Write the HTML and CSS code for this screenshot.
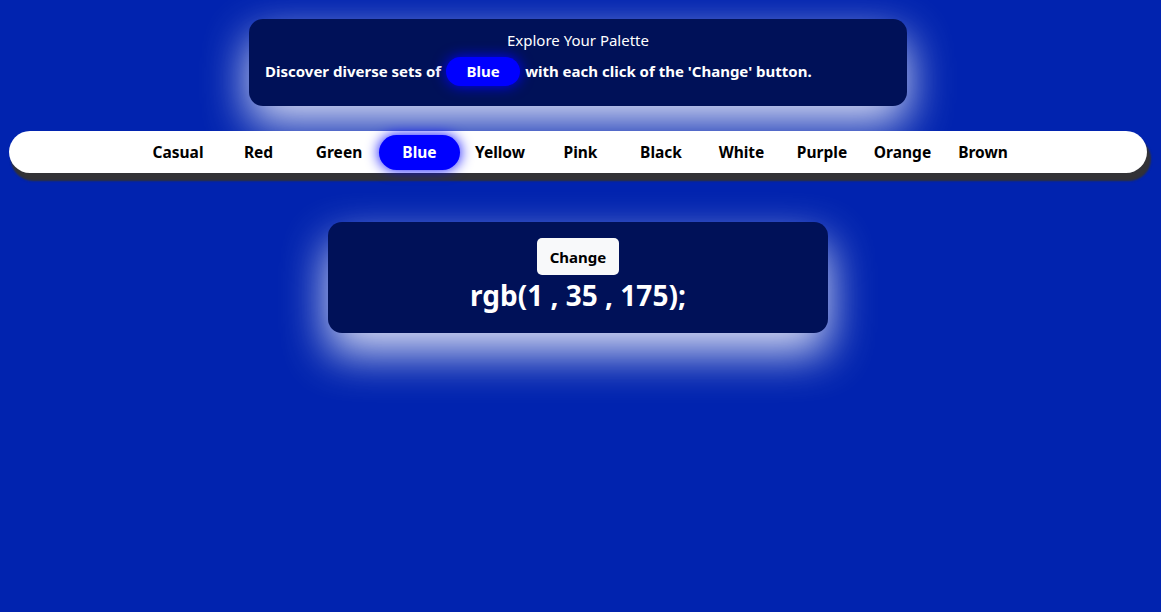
FILE: index.html
```html
<!DOCTYPE html>
<html>
<head>
<meta charset="utf-8">
<link rel="stylesheet" href="styles.css">
</head>
<body>
<div class="page">
  <section class="intro">
    <h1 class="intro-title">Explore Your Palette</h1>
    <p class="intro-text">Discover diverse sets of <span class="pill pill-inline">Blue</span> with each click of the 'Change' button.</p>
  </section>
  <nav class="tabs">
    <span class="tab">Casual</span>
    <span class="tab">Red</span>
    <span class="tab">Green</span>
    <span class="tab active">Blue</span>
    <span class="tab">Yellow</span>
    <span class="tab">Pink</span>
    <span class="tab">Black</span>
    <span class="tab">White</span>
    <span class="tab">Purple</span>
    <span class="tab">Orange</span>
    <span class="tab">Brown</span>
  </nav>
  <section class="result">
    <button class="change">Change</button>
    <div class="rgb">rgb(1 , 35 , 175);</div>
  </section>
</div>
</body>
</html>
```

FILE: styles.css
```css
html, body {
  margin: 0;
  padding: 0;
  background: #0123af;
  height: 100%;
}
body {
  font-family: "Noto Sans", "Open Sans", sans-serif;
  color: #fff;
}
.page {
  padding: 19px 14px 0 9px;
  display: flex;
  flex-direction: column;
  align-items: center;
}
.intro {
  width: 658px;
  height: 87px;
  box-sizing: border-box;
  background: #001158;
  border-radius: 14px;
  padding: 11px 16px 0;
  box-shadow: 0 18px 45px rgba(255, 255, 255, 0.85);
}
.intro-title {
  margin: 0;
  text-align: center;
  font-size: 15px;
  font-weight: 400;
  line-height: 20px;
}
.intro-text {
  margin: 7px 0 0;
  font-size: 15px;
  font-weight: 700;
  line-height: 29px;
  display: flex;
  align-items: center;
  gap: 4px;
}
.pill {
  display: inline-flex;
  align-items: center;
  justify-content: center;
  background: #0000ff;
  color: #fff;
  border-radius: 16px;
  box-shadow: 0 0 14px #0000ff;
}
.pill-inline {
  width: 74px;
  height: 29px;
  margin: 0 1px;
}
.tabs {
  margin-top: 25px;
  align-self: stretch;
  height: 42px;
  box-sizing: border-box;
  padding-left: 5px;
  background: #fff;
  border-radius: 21px;
  box-shadow: 3px 7px 2px 1px #323236;
  display: flex;
  justify-content: center;
  align-items: center;
}
.tab {
  width: 80.5px;
  height: 35px;
  display: flex;
  align-items: center;
  justify-content: center;
  color: #000;
  font-weight: 700;
  font-size: 15.5px;
  border-radius: 18px;
}
.tab.active {
  background: #0000ff;
  color: #fff;
  box-shadow: 0 0 14px #0000ff;
}
.result {
  margin-top: 49px;
  width: 500px;
  height: 111px;
  box-sizing: border-box;
  background: #001158;
  border-radius: 14px;
  box-shadow: 0 20px 45px rgba(255, 255, 255, 0.85);
  display: flex;
  flex-direction: column;
  align-items: center;
  padding-top: 16px;
}
.change {
  width: 82px;
  height: 37px;
  border: none;
  border-radius: 5px;
  background: #f8f9fa;
  color: #000;
  font-family: inherit;
  font-weight: 700;
  font-size: 15px;
  padding: 0;
}
.rgb {
  font-size: 28px;
  font-weight: 700;
  line-height: 38px;
  margin-top: 1px;
}
```
